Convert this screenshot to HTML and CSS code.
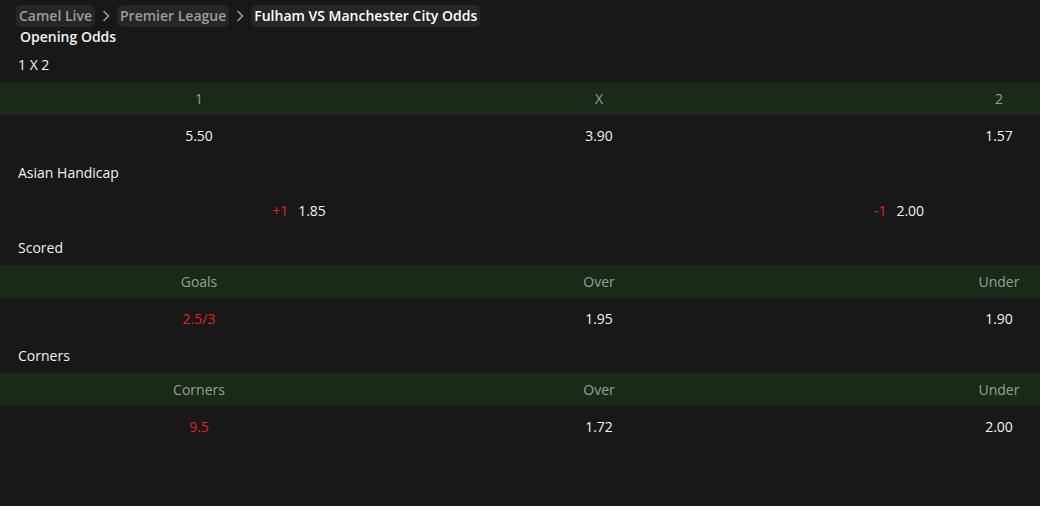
FILE: index.html
```html
<!DOCTYPE html>
<html lang="en">
<head>
    <meta charset="UTF-8">
    <meta name="viewport" content="width=device-width, initial-scale=1.0">
    <title>Fulham VS Manchester City Odds</title>
    <link rel="stylesheet" href="styles.css">
</head>
<body>
    <nav class="crumbs">
        <a class="crumb" href="#">Camel Live</a>
        <svg class="chev" width="10" height="14" viewBox="0 0 10 14"><path d="M2.5 2 L7.5 7 L2.5 12" fill="none" stroke="#9a9a9a" stroke-width="1.6"/></svg>
        <a class="crumb" href="#">Premier League</a>
        <svg class="chev" width="10" height="14" viewBox="0 0 10 14"><path d="M2.5 2 L7.5 7 L2.5 12" fill="none" stroke="#9a9a9a" stroke-width="1.6"/></svg>
        <span class="crumb current">Fulham VS Manchester City Odds</span>
    </nav>

    <h1 class="page-title">Opening Odds</h1>

    <div class="section-title">1 X 2</div>
    <div class="row head three">
        <div>1</div><div>X</div><div>2</div>
    </div>
    <div class="row three">
        <div>5.50</div><div>3.90</div><div>1.57</div>
    </div>

    <div class="section-title">Asian Handicap</div>
    <div class="row two">
        <div><span class="red">+1</span><span class="hcp">1.85</span></div>
        <div><span class="red">-1</span><span class="hcp">2.00</span></div>
    </div>

    <div class="section-title">Scored</div>
    <div class="row head three">
        <div>Goals</div><div>Over</div><div>Under</div>
    </div>
    <div class="row three">
        <div class="red">2.5/3</div><div>1.95</div><div>1.90</div>
    </div>

    <div class="section-title">Corners</div>
    <div class="row head three">
        <div>Corners</div><div>Over</div><div>Under</div>
    </div>
    <div class="row three">
        <div class="red">9.5</div><div>1.72</div><div>2.00</div>
    </div>
</body>
</html>
```

FILE: styles.css
```css
body {
    font-family: "Open Sans", "Noto Sans", sans-serif;
    font-size: 14px;
    background-color: #181818;
    color: #f2f2f2;
    margin: 0;
    overflow: hidden;
}
.crumbs {
    display: flex;
    align-items: center;
    gap: 6px;
    padding: 5px 16px 0;
}
.crumb {
    background: #262626;
    border-radius: 5px;
    padding: 0 3px;
    height: 22px;
    line-height: 22px;
    font-weight: 600;
    color: #9a9ea3;
    text-decoration: none;
}
.crumb.current {
    color: #ffffff;
}
.chev {
    display: block;
}
.page-title {
    font-size: 14px;
    font-weight: 600;
    margin: 0;
    padding: 0 20px;
    height: 20px;
    line-height: 20px;
}
.section-title {
    height: 35px;
    line-height: 35px;
    padding: 0 18px;
}
.row {
    display: grid;
    height: 40px;
    align-items: center;
    text-align: center;
}
.row > div {
    padding-right: 2px;
}
/* last column is cut by the window edge, keep its centre where a full column would put it */
.row > div:last-child {
    padding-left: 158px;
    padding-right: 0;
}
.row.three {
    grid-template-columns: 400px 400px 1fr;
}
.row.two {
    grid-template-columns: 600px 1fr;
}
.row.head {
    height: 33px;
    background-color: #1a2918;
    color: #98a096;
}
.red {
    color: #e3241e;
}
.hcp {
    margin-left: 10px;
}
```
